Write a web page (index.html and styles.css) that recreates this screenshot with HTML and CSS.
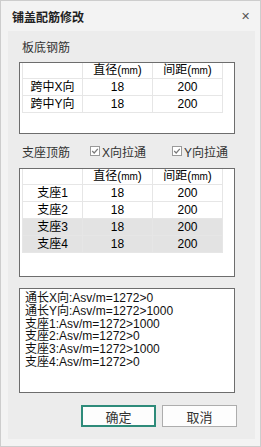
FILE: index.html
```html
<!DOCTYPE html>
<html lang="zh">
<head>
    <meta charset="UTF-8" />
    <title>铺盖配筋修改</title>
    <link rel="stylesheet" href="styles.css">
</head>
<body>
    <div class="window">
        <div class="titlebar">
            <span class="title">铺盖配筋修改</span>
            <span class="close">&#x2715;</span>
        </div>
        <div class="panel">
            <div class="label">板底钢筋</div>
            <div class="box box-bottom">
                <table class="grid">
                    <tr class="head"><td></td><td>直径(<small>mm</small>)</td><td>间距(<small>mm</small>)</td></tr>
                    <tr><td>跨中X向</td><td>18</td><td>200</td></tr>
                    <tr><td>跨中Y向</td><td>18</td><td>200</td></tr>
                </table>
            </div>

            <div class="check-row">
                <span class="label-inline">支座顶筋</span>
                <label class="check">
                    <svg width="10" height="10" viewBox="0 0 10 10"><rect x="0.5" y="0.5" width="9" height="9" fill="#fff" stroke="#9a9a9a"/><path d="M2.2 5 L4.2 7 L7.8 2.8" fill="none" stroke="#7a7a7a" stroke-width="1.2"/></svg>
                    X向拉通
                </label>
                <label class="check">
                    <svg width="10" height="10" viewBox="0 0 10 10"><rect x="0.5" y="0.5" width="9" height="9" fill="#fff" stroke="#9a9a9a"/><path d="M2.2 5 L4.2 7 L7.8 2.8" fill="none" stroke="#7a7a7a" stroke-width="1.2"/></svg>
                    Y向拉通
                </label>
            </div>
            <div class="box box-support">
                <table class="grid">
                    <tr class="head"><td></td><td>直径(<small>mm</small>)</td><td>间距(<small>mm</small>)</td></tr>
                    <tr><td>支座1</td><td>18</td><td>200</td></tr>
                    <tr><td>支座2</td><td>18</td><td>200</td></tr>
                    <tr class="sel"><td>支座3</td><td>18</td><td>200</td></tr>
                    <tr class="sel"><td>支座4</td><td>18</td><td>200</td></tr>
                </table>
            </div>

            <div class="box box-log">
                <div>通长X向:Asv/m=1272&gt;0</div>
                <div>通长Y向:Asv/m=1272&gt;1000</div>
                <div>支座1:Asv/m=1272&gt;1000</div>
                <div>支座2:Asv/m=1272&gt;0</div>
                <div>支座3:Asv/m=1272&gt;1000</div>
                <div>支座4:Asv/m=1272&gt;0</div>
            </div>

            <div class="buttons">
                <button class="btn primary">确定</button>
                <button class="btn">取消</button>
            </div>
        </div>
    </div>
</body>
</html>
```

FILE: styles.css
```css
body {
    margin: 0;
    padding: 0;
    font-family: "Liberation Sans", "Noto Sans CJK SC", sans-serif;
    font-size: 12px;
    color: #000;
    background: #fff;
}

.window {
    width: 261px;
    height: 447px;
    box-sizing: border-box;
    border: 1px solid #cdcdcd;
    background: #f3f3f3;
}

.titlebar {
    height: 30px;
    display: flex;
    align-items: center;
    justify-content: space-between;
    padding: 0 10px 0 11px;
}

    .titlebar .title {
        font-weight: bold;
        font-size: 12px;
        color: #222;
    }

    .titlebar .close {
        font-size: 11px;
        color: #555;
    }

.panel {
    margin: 0 5px 0 7px;
    height: 408px;
    box-sizing: border-box;
    background: #ececec;
    padding: 9px 20px 0 11px;
}

.label {
    padding-left: 3px;
    height: 16px;
    line-height: 16px;
    color: #333;
}

.box {
    background: #fff;
    border: 1px solid #6d6d6d;
    box-sizing: border-box;
}

.box-bottom {
    margin-top: 6px;
    height: 72px;
    padding: 0 0 0 2px;
}

.box-support {
    margin-top: 9px;
    height: 109px;
    padding: 0 0 0 2px;
}

.grid {
    border-collapse: collapse;
    table-layout: fixed;
}

    .grid td {
        border: 1px solid #e6e6e6;
        border-top: none;
        height: 16px;
        padding: 0;
        text-align: center;
        line-height: 16px;
        white-space: nowrap;
    }

        .grid td:nth-child(1) { width: 59px; }
        .grid td:nth-child(2) { width: 69px; }
        .grid td:nth-child(3) { width: 69px; }

    .grid .head td {
        height: 14px;
        line-height: 14px;
    }

    .grid small {
        font-size: 10px;
    }

    .grid .sel td {
        background: #e3e3e3;
    }

.check-row {
    margin-top: 9px;
    height: 16px;
    display: flex;
    align-items: center;
    padding-left: 3px;
    color: #333;
}

.label-inline {
    width: 65px;
    flex: none;
    margin-right: 3px;
}

.check {
    display: flex;
    align-items: center;
    gap: 2px;
    width: 82px;
    flex: none;
}

.box-log {
    margin-top: 11px;
    height: 105px;
    padding: 3px 5px;
    line-height: 12.8px;
    color: #111;
}

.buttons {
    margin-top: 12px;
    display: flex;
    justify-content: flex-end;
    gap: 6px;
    margin-right: -2px;
}

.btn {
    width: 75px;
    height: 22px;
    box-sizing: border-box;
    border: 1px solid #adadad;
    background: #fdfdfd;
    font-family: "Liberation Sans", "Noto Sans CJK SC", sans-serif;
    font-size: 13px;
    color: #333;
    padding: 0;
}

    .btn.primary {
        border: 2px solid #2e8b7a;
    }
```
